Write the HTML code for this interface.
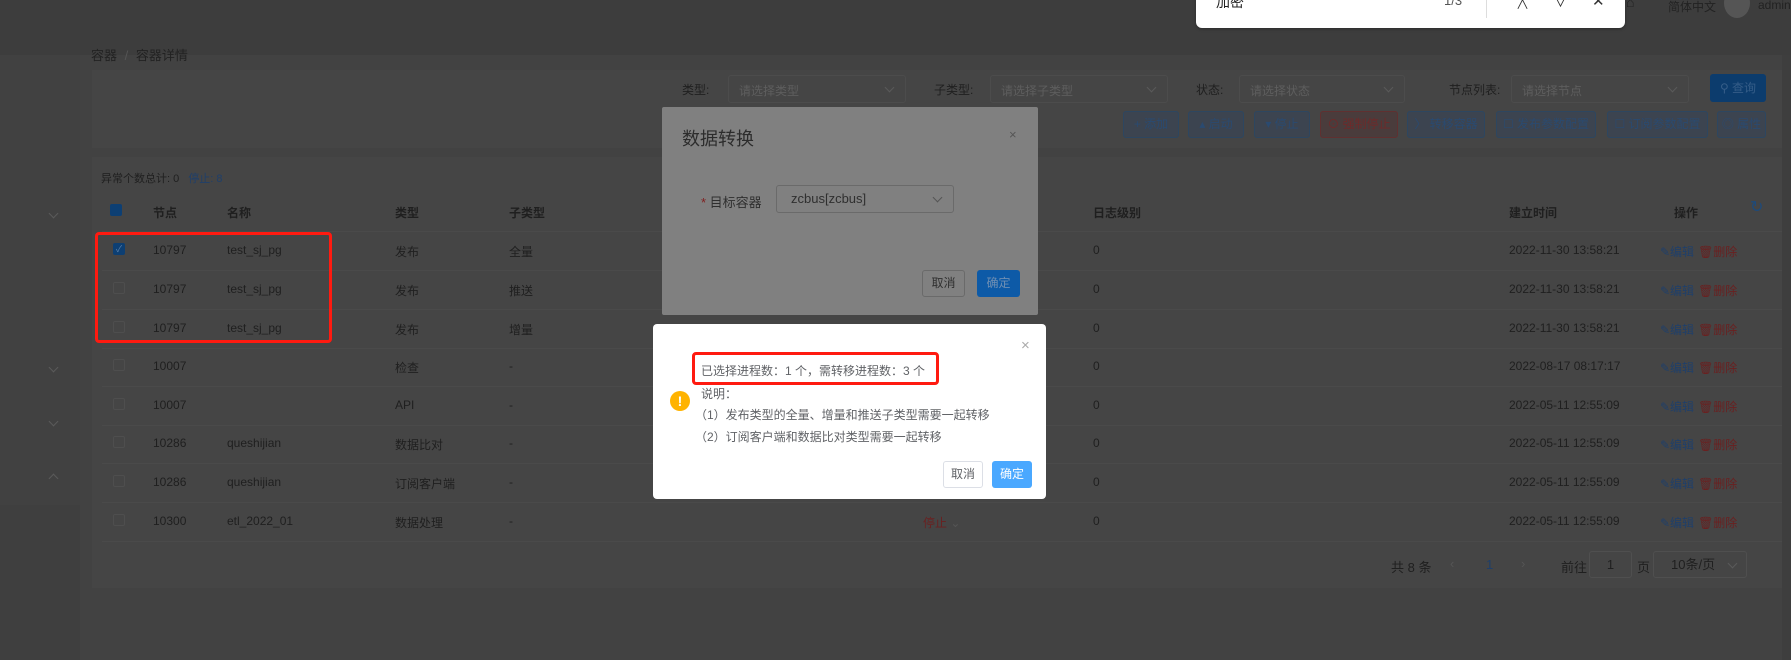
<!DOCTYPE html>
<html><head><meta charset="utf-8"><style>
*{margin:0;padding:0;box-sizing:border-box}
body{width:1791px;height:660px;overflow:hidden;background:#3f3f3f;font-family:"Liberation Sans","Noto Sans CJK SC",sans-serif;font-size:12px;color:#1f1f1f;position:relative}
.a{position:absolute;white-space:nowrap}
.sel{position:absolute;border:1px solid #4c4c4c;border-radius:3px;height:28px;color:#5e5e5e;padding:6px 10px;font-size:12px;white-space:nowrap}
.chev{position:absolute;width:7px;height:7px;border-right:1px solid #5a5a5a;border-bottom:1px solid #5a5a5a;transform:rotate(45deg)}
.sel .chev{right:12px;top:8px}
.btn{position:absolute;top:111px;height:27px;border:1px solid #2d4660;border-radius:3px;background:#3c4450;color:#2a4a70;font-size:12px;line-height:25px;text-align:center;white-space:nowrap;overflow:hidden}
.row{position:absolute;left:102px;width:1680px;border-bottom:1px solid #4a4a4a;height:39px}
.row span{position:absolute;top:11px;white-space:nowrap}
.cb{position:absolute;left:11px;top:11px;width:12px;height:12px;border:1px solid #4e4e4e;border-radius:2px}
.op{color:#1f3f6a}.op b{font-weight:normal;color:#6a2020;margin-left:4px}
</style></head><body>
<div class="a" style="left:0;top:0;width:1791px;height:55px;background:#3d3d3d"></div>
<div class="a" style="left:0;top:55px;width:80px;height:450px;background:#414141"></div>
<div class="a" style="left:80px;top:55px;width:1711px;height:605px;background:#424242"></div>
<div class="a" style="left:92px;top:70px;width:1690px;height:78px;background:#454545"></div>
<div class="a" style="left:92px;top:157px;width:1690px;height:431px;background:#454545"></div>
<div class="a" style="left:1782px;top:55px;width:9px;height:605px;background:#3e3e3e"></div>

<div class="chev" style="left:50px;top:210px"></div>
<div class="chev" style="left:50px;top:364px"></div>
<div class="chev" style="left:50px;top:418px"></div>
<div class="chev" style="left:50px;top:475px;transform:rotate(225deg)"></div>

<div class="a" style="left:91px;top:45px;font-size:13px;color:#222">容器 <span style="color:#555;margin:0 4px">/</span> 容器详情</div>

<div class="a" style="left:682px;top:81px">类型:</div>
<div class="sel" style="left:728px;top:75px;width:178px">请选择类型<i class="chev"></i></div>
<div class="a" style="left:934px;top:81px">子类型:</div>
<div class="sel" style="left:990px;top:75px;width:178px">请选择子类型<i class="chev"></i></div>
<div class="a" style="left:1196px;top:81px">状态:</div>
<div class="sel" style="left:1239px;top:75px;width:166px">请选择状态<i class="chev"></i></div>
<div class="a" style="left:1449px;top:81px">节点列表:</div>
<div class="sel" style="left:1511px;top:75px;width:178px">请选择节点<i class="chev"></i></div>
<div class="a" style="left:1710px;top:74px;width:56px;height:28px;background:#0c3c6d;border-radius:3px;color:#355d88;line-height:28px;text-align:center">⚲ 查询</div>

<div class="btn" style="left:1123px;width:56px">+ 添加</div>
<div class="btn" style="left:1188px;width:56px">▴ 启动</div>
<div class="btn" style="left:1254px;width:56px">▾ 停止</div>
<div class="btn" style="left:1320px;width:78px;background:#4a3c3c;border-color:#603030;color:#6e2a2a">⊙ 强制停止</div>
<div class="btn" style="left:1407px;width:78px">〉 转移容器</div>
<div class="btn" style="left:1496px;width:100px">☐ 发布参数配置</div>
<div class="btn" style="left:1607px;width:101px">☐ 订阅参数配置</div>
<div class="btn" style="left:1717px;width:49px">◎ 属性</div>

<div class="a" style="left:101px;top:170px;font-size:11px">异常个数总计: 0 <span style="color:#1f3f6a;margin-left:6px">停止: 8</span></div>

<div class="row" style="top:193px">
<i class="a" style="left:8px;top:11px;width:12px;height:12px;background:#0d3f73;border-radius:2px"></i>
<span style="left:51px;font-weight:bold">节点</span><span style="left:125px;font-weight:bold">名称</span><span style="left:293px;font-weight:bold">类型</span><span style="left:407px;font-weight:bold">子类型</span><span style="left:991px;font-weight:bold">日志级别</span><span style="left:1407px;font-weight:bold">建立时间</span><span style="left:1572px;font-weight:bold">操作</span><span style="left:1648px;top:4px;color:#1e4a7a;font-size:16px">↻</span>
</div>

<div class="row" style="top:232px"><i class="cb" style="background:#0d3f73;border-color:#0d3f73;color:#5a7fa8;font-size:9px;line-height:11px;text-align:center;font-style:normal">✓</i><span style="left:51px">10797</span><span style="left:125px">test_sj_pg</span><span style="left:293px">发布</span><span style="left:407px">全量</span><span style="left:991px">0</span><span style="left:1407px">2022-11-30 13:58:21</span><span class="op" style="left:1558px">✎编辑<b>🗑删除</b></span></div>
<div class="row" style="top:271px"><i class="cb"></i><span style="left:51px">10797</span><span style="left:125px">test_sj_pg</span><span style="left:293px">发布</span><span style="left:407px">推送</span><span style="left:991px">0</span><span style="left:1407px">2022-11-30 13:58:21</span><span class="op" style="left:1558px">✎编辑<b>🗑删除</b></span></div>
<div class="row" style="top:310px"><i class="cb"></i><span style="left:51px">10797</span><span style="left:125px">test_sj_pg</span><span style="left:293px">发布</span><span style="left:407px">增量</span><span style="left:991px">0</span><span style="left:1407px">2022-11-30 13:58:21</span><span class="op" style="left:1558px">✎编辑<b>🗑删除</b></span></div>
<div class="row" style="top:348px"><i class="cb"></i><span style="left:51px">10007</span><span style="left:293px">检查</span><span style="left:407px">-</span><span style="left:991px">0</span><span style="left:1407px">2022-08-17 08:17:17</span><span class="op" style="left:1558px">✎编辑<b>🗑删除</b></span></div>
<div class="row" style="top:387px"><i class="cb"></i><span style="left:51px">10007</span><span style="left:293px">API</span><span style="left:407px">-</span><span style="left:991px">0</span><span style="left:1407px">2022-05-11 12:55:09</span><span class="op" style="left:1558px">✎编辑<b>🗑删除</b></span></div>
<div class="row" style="top:425px"><i class="cb"></i><span style="left:51px">10286</span><span style="left:125px">queshijian</span><span style="left:293px">数据比对</span><span style="left:407px">-</span><span style="left:991px">0</span><span style="left:1407px">2022-05-11 12:55:09</span><span class="op" style="left:1558px">✎编辑<b>🗑删除</b></span></div>
<div class="row" style="top:464px"><i class="cb"></i><span style="left:51px">10286</span><span style="left:125px">queshijian</span><span style="left:293px">订阅客户端</span><span style="left:407px">-</span><span style="left:991px">0</span><span style="left:1407px">2022-05-11 12:55:09</span><span class="op" style="left:1558px">✎编辑<b>🗑删除</b></span></div>
<div class="row" style="top:503px"><i class="cb"></i><span style="left:51px">10300</span><span style="left:125px">etl_2022_01</span><span style="left:293px">数据处理</span><span style="left:407px">-</span><span style="left:821px;color:#6a2020">停止 <span style="position:static;color:#555">⌄</span></span><span style="left:991px">0</span><span style="left:1407px">2022-05-11 12:55:09</span><span class="op" style="left:1558px">✎编辑<b>🗑删除</b></span></div>

<div class="a" style="left:1391px;top:557px;font-size:13px">共 8 条</div>
<div class="a" style="left:1450px;top:556px;color:#555;font-size:13px">‹</div>
<div class="a" style="left:1486px;top:557px;color:#1f3f6a;font-size:13px">1</div>
<div class="a" style="left:1521px;top:556px;color:#555;font-size:13px">›</div>
<div class="a" style="left:1561px;top:557px;font-size:13px">前往</div>
<div class="a" style="left:1589px;top:551px;width:43px;height:27px;border:1px solid #4f4f4f;border-radius:3px;text-align:center;line-height:25px;font-size:13px">1</div>
<div class="a" style="left:1637px;top:557px;font-size:13px">页</div>
<div class="a" style="left:1653px;top:551px;width:94px;height:27px;border:1px solid #4f4f4f;border-radius:3px;padding:0 17px;line-height:25px;font-size:13px">10条/页<i class="chev" style="right:10px;top:8px"></i></div>

<div class="a" style="left:95px;top:232px;width:237px;height:111px;border:3px solid #ff1a10;border-radius:4px"></div>

<!-- dialog 1 -->
<div class="a" style="left:662px;top:107px;width:376px;height:208px;background:#808080;border-radius:2px">
<div class="a" style="left:20px;top:18px;font-size:18px;color:#2c2c2c">数据转换</div>
<div class="a" style="left:347px;top:20px;color:#555;font-size:13px">×</div>
<div class="a" style="left:39px;top:85px;font-size:13px;color:#2f2f2f"><span style="color:#802020">*</span> 目标容器</div>
<div class="a" style="left:114px;top:78px;width:178px;height:28px;border:1px solid #6a6a6a;border-radius:3px;padding:0 14px;line-height:26px;font-size:13px;color:#2f2f2f">zcbus[zcbus]<i class="chev" style="right:12px;top:8px;border-color:#555"></i></div>
<div class="a" style="left:260px;top:163px;width:43px;height:27px;border:1px solid #6a6a6a;border-radius:3px;line-height:25px;text-align:center;color:#2f2f2f">取消</div>
<div class="a" style="left:315px;top:163px;width:43px;height:27px;background:#0d5aa7;border-radius:3px;line-height:27px;text-align:center;color:#6f8fb3">确定</div>
</div>

<!-- dialog 2 -->
<div class="a" style="left:653px;top:324px;width:393px;height:175px;background:#fff;border-radius:4px">
<div class="a" style="left:368px;top:13px;color:#aaa;font-size:15px">×</div>
<div class="a" style="left:17px;top:67px;width:20px;height:20px;border-radius:50%;background:#ffb300;color:#fff;font-weight:bold;text-align:center;line-height:20px;font-size:14px">!</div>
<div class="a" style="left:48px;top:38px;color:#606266;font-size:12px">已选择进程数：1 个，需转移进程数：3 个</div>
<div class="a" style="left:48px;top:61px;color:#606266">说明：</div>
<div class="a" style="left:42px;top:82px;color:#606266">（1）发布类型的全量、增量和推送子类型需要一起转移</div>
<div class="a" style="left:42px;top:104px;color:#606266">（2）订阅客户端和数据比对类型需要一起转移</div>
<div class="a" style="left:290px;top:137px;width:40px;height:27px;border:1px solid #dcdfe6;border-radius:3px;line-height:25px;text-align:center;color:#606266">取消</div>
<div class="a" style="left:339px;top:137px;width:40px;height:27px;background:#4aa8ff;border-radius:3px;line-height:27px;text-align:center;color:#fff">确定</div>
</div>
<div class="a" style="left:692px;top:352px;width:247px;height:33px;border:3px solid #ff1a10;border-radius:4px"></div>

<!-- header right -->
<div class="a" style="left:1626px;top:-6px;color:#222;font-size:14px">⌂</div>
<div class="a" style="left:1668px;top:-2px;color:#222;font-size:12px">简体中文</div>
<div class="a" style="left:1724px;top:-12px;width:26px;height:30px;border-radius:50%;background:#555"></div>
<div class="a" style="left:1758px;top:-2px;color:#222">admin</div>

<!-- find bar -->
<div class="a" style="left:1196px;top:-4px;width:429px;height:32px;background:#fff;border-radius:0 0 6px 6px;box-shadow:0 1px 3px rgba(0,0,0,.3)">
<div class="a" style="left:20px;top:-4px;font-size:14px;color:#222">加密</div>
<div class="a" style="left:248px;top:-3px;font-size:13px;color:#555">1/3</div>
<div class="a" style="left:290px;top:0;width:1px;height:22px;background:#ddd"></div>
<div class="a" style="left:320px;top:-2px;font-size:13px;color:#333">∧</div>
<div class="a" style="left:358px;top:-4px;font-size:13px;color:#333">∨</div>
<div class="a" style="left:396px;top:-4px;font-size:15px;color:#333">✕</div>
</div>
</body></html>
